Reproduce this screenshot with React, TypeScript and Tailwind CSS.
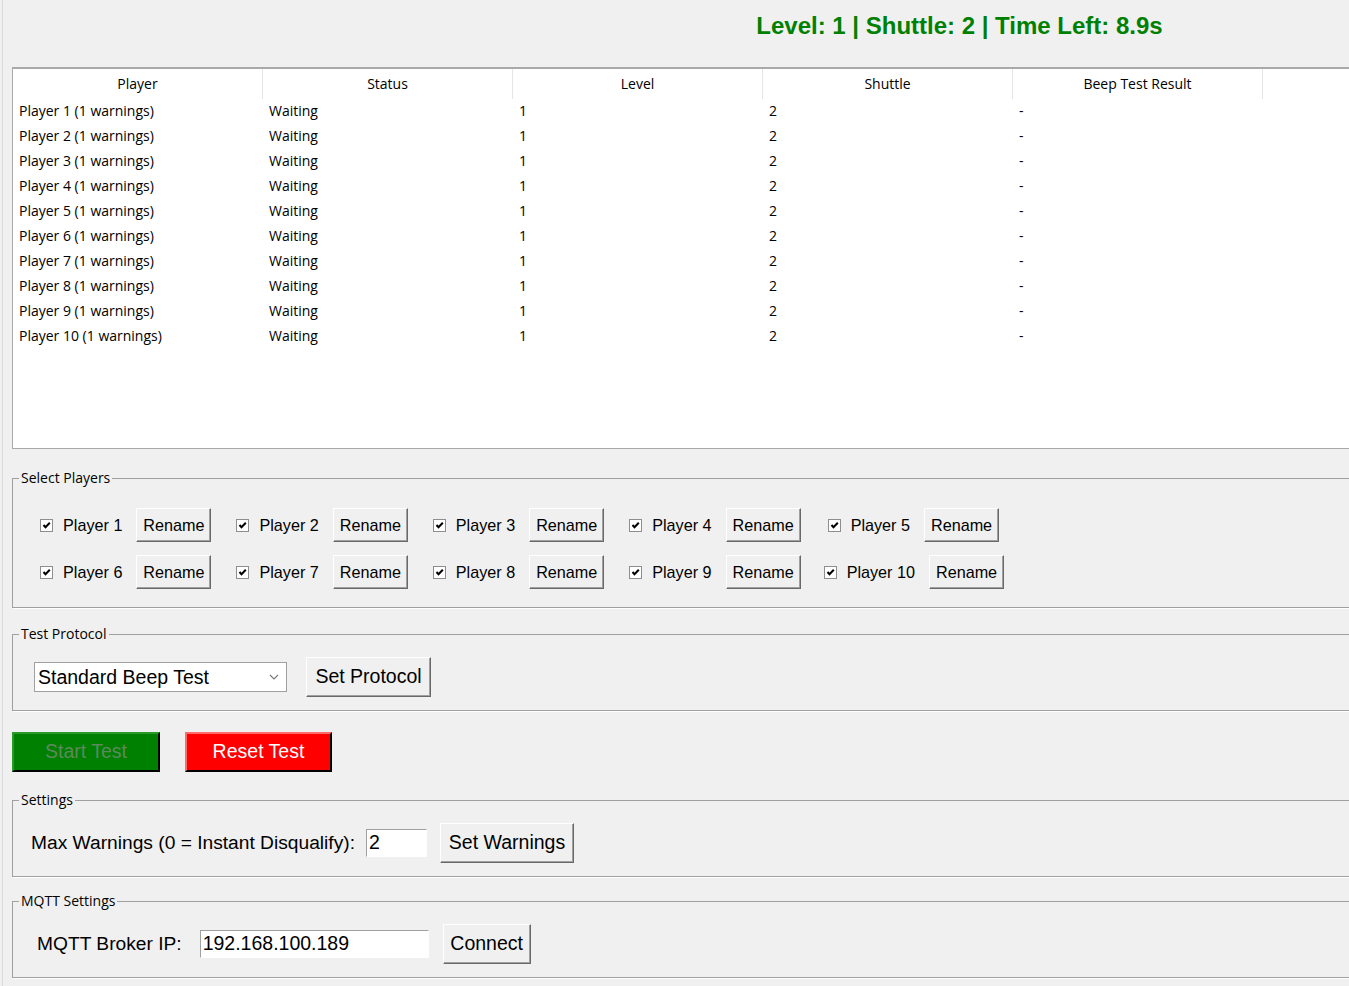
import React from "react";

const ui = "font-['Open_Sans','Noto_Sans',sans-serif]";
const arial = "font-['Liberation_Sans',Arial,sans-serif]";

function Btn({ children, className = "" }: { children: React.ReactNode; className?: string }) {
  return (
    <button
      className={`box-border flex shrink-0 items-center justify-center bg-[#f0f0f0] border border-t-white border-l-white border-b-[#696969] border-r-[#696969] shadow-[inset_-1px_-1px_0_#a0a0a0] text-black ${arial} ${className}`}
    >
      {children}
    </button>
  );
}

function Group({ title, className = "", children }: { title: string; className?: string; children: React.ReactNode }) {
  return (
    <fieldset className={`ml-[9px] w-[1900px] border border-[#a0a0a0] shadow-[1px_1px_0_#ffffff] ${className}`}>
      <legend className={`ml-[6px] px-[2px] text-[14px] leading-[18px] text-black ${ui}`}>{title}</legend>
      {children}
    </fieldset>
  );
}

function Check() {
  return (
    <span className="box-border flex h-[13px] w-[13px] shrink-0 items-center justify-center border border-[#8e8e8e] bg-white">
      <svg width="11" height="11" viewBox="0 0 11 11">
        <path d="M2.5 5 L4.5 7.2 L8.8 2.8" fill="none" stroke="#000" strokeWidth="2" />
      </svg>
    </span>
  );
}

function PlayerItem({ n, ml }: { n: number; ml: string }) {
  return (
    <div className={`flex items-center ${ml}`}>
      <Check />
      <span className={`ml-[10px] text-[16.2px] leading-[20px] text-black ${arial}`}>Player {n}</span>
      <Btn className="ml-[14px] h-[34px] w-[75px] text-[16.2px]">Rename</Btn>
    </div>
  );
}

const headers = ["Player", "Status", "Level", "Shuttle", "Beep Test Result", "", "", ""];

export default function App() {
  const players = Array.from({ length: 10 }, (_, i) => i + 1);
  return (
    <div className="h-[986px] w-[1349px] overflow-hidden bg-[#f0f0f0]">
      <div className="ml-[2px] h-full w-[1916px] border-l border-[#dcdcdc]">
        <div className="flex h-[67px] w-[1913px] justify-center pt-[12px]">
          <span className={`text-[24px] font-bold leading-[28px] text-[#008000] ${arial}`}>
            Level: 1 | Shuttle: 2 | Time Left: 8.9s
          </span>
        </div>

        <div className={`ml-[9px] box-border h-[382px] w-[1900px] border border-t-2 border-[#a9a9a9] bg-white ${ui}`}>
          <div className="flex h-[30px]">
            {headers.map((h, i) => (
              <div
                key={i}
                className="flex h-full w-[250px] shrink-0 items-center justify-center border-r border-[#e5e5e5] pb-[2px] text-[14px] text-black"
              >
                {h}
              </div>
            ))}
          </div>
          {players.map((p) => (
            <div key={p} className="flex h-[25px] items-center pb-[2px] text-[14px] text-black">
              <div className="w-[250px] shrink-0 pl-[6px]">Player {p} (1 warnings)</div>
              <div className="w-[250px] shrink-0 pl-[6px]">Waiting</div>
              <div className="w-[250px] shrink-0 pl-[6px]">1</div>
              <div className="w-[250px] shrink-0 pl-[6px]">2</div>
              <div className="w-[250px] shrink-0 pl-[6px]">-</div>
            </div>
          ))}
        </div>

        <Group title="Select Players" className="mt-[20px] pb-[18px] pt-[21px]">
          <div className="flex flex-col gap-[13px] pl-[27px]">
            <div className="flex items-center">
              <PlayerItem n={1} ml="" />
              <PlayerItem n={2} ml="ml-[25px]" />
              <PlayerItem n={3} ml="ml-[25px]" />
              <PlayerItem n={4} ml="ml-[25px]" />
              <PlayerItem n={5} ml="ml-[27px]" />
            </div>
            <div className="flex items-center">
              <PlayerItem n={6} ml="" />
              <PlayerItem n={7} ml="ml-[25px]" />
              <PlayerItem n={8} ml="ml-[25px]" />
              <PlayerItem n={9} ml="ml-[25px]" />
              <PlayerItem n={10} ml="ml-[23px]" />
            </div>
          </div>
        </Group>

        <Group title="Test Protocol" className="mt-[17px] pb-[13px] pt-[14px]">
          <div className="flex items-center pl-[21px]">
            <div className="box-border flex h-[30px] w-[253px] items-center justify-between border border-[#a0a0a0] bg-white pl-[3px] pr-[7px]">
              <span className={`text-[19.5px] leading-[24px] text-black ${arial}`}>Standard Beep Test</span>
              <svg width="10" height="6" viewBox="0 0 10 6">
                <path d="M1 1 L5 5 L9 1" fill="none" stroke="#7a7a7a" strokeWidth="1.2" />
              </svg>
            </div>
            <Btn className="ml-[19px] h-[40px] w-[125px] text-[19.5px]">Set Protocol</Btn>
          </div>
        </Group>

        <div className="ml-[9px] mt-[21px] flex gap-[25px]">
          <button
            className={`box-border flex h-[40px] w-[148px] items-center justify-center border-2 border-t-[#2a9a2a] border-l-[#2a9a2a] border-b-black border-r-black bg-[#008000] text-[19.5px] text-[#5c8a5c] ${arial}`}
          >
            Start Test
          </button>
          <button
            className={`box-border flex h-[40px] w-[147px] items-center justify-center border-2 border-t-[#ff6a6a] border-l-[#ff6a6a] border-b-black border-r-black bg-[#ff0000] text-[19.5px] text-white ${arial}`}
          >
            Reset Test
          </button>
        </div>

        <Group title="Settings" className="mt-[19px] pb-[13px] pt-[14px]">
          <div className="flex items-center pl-[18px]">
            <span className={`text-[19.2px] leading-[24px] text-black ${arial}`}>Max Warnings (0 = Instant Disqualify):</span>
            <div
              className={`ml-[11px] box-border flex h-[28px] w-[61px] items-center border border-t-[#a0a0a0] border-l-[#a0a0a0] border-b-white border-r-white bg-white pl-[2px] text-[19.5px] text-black ${arial}`}
            >
              2
            </div>
            <Btn className="ml-[13px] h-[40px] w-[134px] text-[19.5px]">Set Warnings</Btn>
          </div>
        </Group>

        <Group title="MQTT Settings" className="mt-[15px] pb-[13px] pt-[14px]">
          <div className="flex items-center pl-[24px]">
            <span className={`text-[19.2px] leading-[24px] text-black ${arial}`}>MQTT Broker IP:</span>
            <div
              className={`ml-[18px] box-border flex h-[28px] w-[229px] items-center border border-t-[#a0a0a0] border-l-[#a0a0a0] border-b-white border-r-white bg-white pl-[2px] text-[19.5px] text-black ${arial}`}
            >
              192.168.100.189
            </div>
            <Btn className="ml-[14px] h-[40px] w-[88px] text-[19.5px]">Connect</Btn>
          </div>
        </Group>
      </div>
    </div>
  );
}
